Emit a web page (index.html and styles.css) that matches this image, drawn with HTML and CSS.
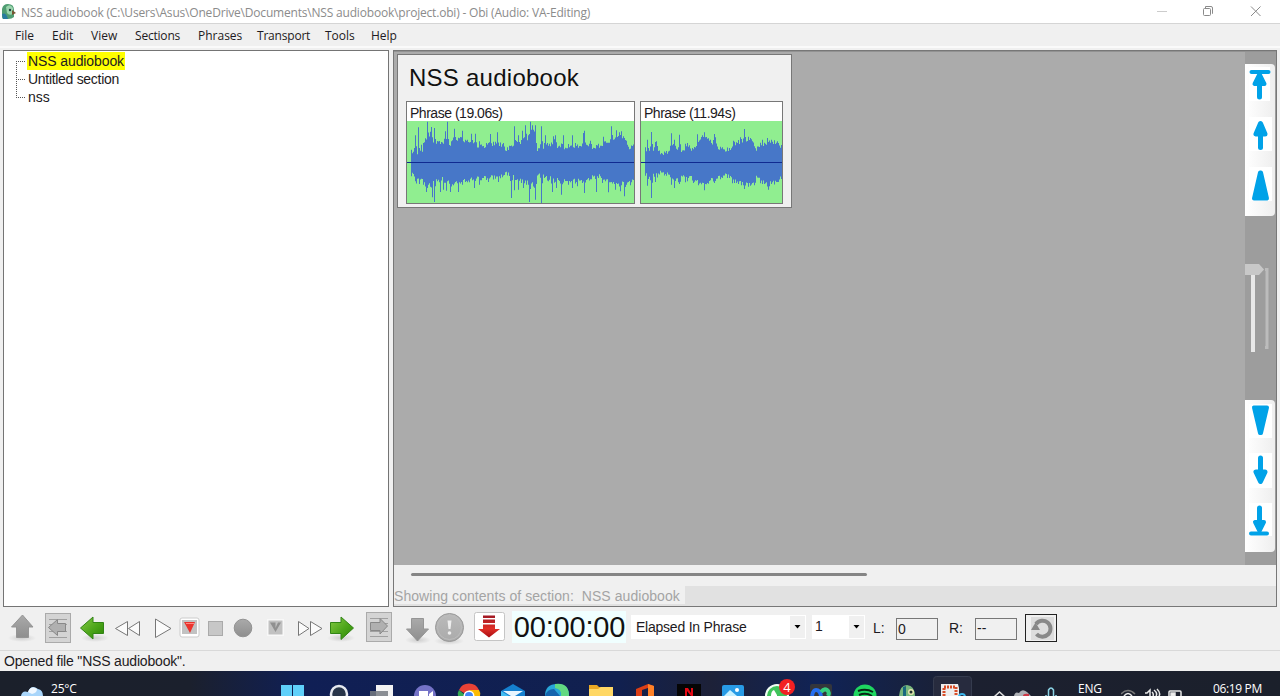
FILE: index.html
```html
<!DOCTYPE html>
<html lang="en">
<head>
<meta charset="utf-8">
<title>NSS audiobook - Obi</title>
<link rel="stylesheet" href="styles.css">
</head>
<body>
<div class="window">
  <header class="titlebar">
    <svg class="app-icon" width="16" height="18" viewBox="0 0 16 18"><path d="M1 14V6Q2 1 7 1Q13 1 13 7V14Q11 16 7 16H3Q1 16 1 14Z" fill="#4f9d72"/><path d="M5 4Q9 0 12 5V11Q8 13 6 10Z" fill="#9bd5ad"/><path d="M1 11Q5 9 7 16H2Z" fill="#277aa0"/><path d="M11 7L15 10L11 12Z" fill="#765532"/><circle cx="9" cy="7" r="1.2" fill="#244"/></svg>
    <span class="title-text">NSS audiobook (C:\Users\Asus\OneDrive\Documents\NSS audiobook\project.obi) - Obi (Audio: VA-Editing)</span>
    <svg class="window-buttons" width="110" height="23" viewBox="0 0 110 23" fill="none" stroke="#8a8a8a"><path d="M3 11.5h10" stroke="#ccc"/><rect x="49.500" y="8.500" width="7" height="7" rx="1"/><path d="M51.500 8.500V6.500H57q1.500 0 1.500 1.500v5.500H58"/><path d="M97 6.500l9.500 9.500M106.500 6.500L97 16"/></svg>
  </header>
  <nav class="menubar">
    <span class="m-file">File</span><span class="m-edit">Edit</span><span class="m-view">View</span><span class="m-sections">Sections</span><span class="m-phrases">Phrases</span><span class="m-transport">Transport</span><span class="m-tools">Tools</span><span class="m-help">Help</span>
  </nav>
  <main class="workspace">
    <aside class="toc">
      <svg class="tree-lines" width="12" height="46" viewBox="0 0 12 46" fill="none" stroke="#555" stroke-dasharray="1 1"><path d="M.5 9v37M0 9.500h10M0 27.500h10M0 45.500h10"/></svg>
      <div class="tree">
        <span class="node selected">NSS audiobook</span>
        <span class="node untitled">Untitled section</span>
        <span class="node">nss</span>
      </div>
    </aside>
    <section class="content">
      <div class="canvas-row">
        <div class="canvas">
          <div class="strip">
            <h1>NSS audiobook</h1>
            <div class="phrases">
              <div class="phrase first"><div class="phrase-label">Phrase (19.06s)</div><svg class="wave" id="wave-a" width="227" height="82" viewBox="0 0 227 82"></svg></div>
              <div class="phrase second"><div class="phrase-label">Phrase (11.94s)</div><svg class="wave" id="wave-b" width="141" height="82" viewBox="0 0 141 82"></svg></div>
            </div>
          </div>
        </div>
        <div class="scroller">
          <svg class="pad" width="30" height="152" viewBox="0 0 30 152">
            <rect x="4" y="3" width="21" height="34" fill="#fff"/><rect x="4" y="53" width="23" height="34" fill="#fff"/><rect x="4" y="103" width="23" height="34" fill="#fff"/>
            <g fill="#00a2e8" stroke="#00a2e8" stroke-linecap="round" stroke-linejoin="round"><path d="M6.500 8H23.500" stroke-width="4"/><path d="M14.500 16V33" stroke-width="5"/><path d="M14.500 10L9.500 20H19.500Z" stroke-width="4"/><path d="M15.500 69V83.500" stroke-width="5"/><path d="M15.500 59.500L11 70H20Z" stroke-width="5"/><path d="M15 108.500H16L22 134.500H9Z" stroke-width="4"/></g>
          </svg>
          <svg class="zoom-track" width="30" height="90" viewBox="0 0 30 90"><path d="M8 10V88" stroke="#e8e8e8" stroke-width="4"/><path d="M20 5.500H22V83.500H20" stroke="#bcbcbc" stroke-width="3" fill="none"/><path d="M0 0H14L19 5.500L14 11H0Z" fill="#c8c8c8"/></svg>
          <svg class="pad lower" width="30" height="152" viewBox="0 0 30 152">
            <rect x="4" y="4" width="23" height="34" fill="#fff"/><rect x="4" y="53" width="23" height="35" fill="#fff"/><rect x="4" y="103" width="23" height="33" fill="#fff"/>
            <g fill="#00a2e8" stroke="#00a2e8" stroke-linecap="round" stroke-linejoin="round"><path d="M9 7.500H22L16 33H15Z" stroke-width="4"/><path d="M15.500 58V73" stroke-width="5"/><path d="M15.500 81.500L11 72H20Z" stroke-width="5"/><path d="M14.500 108V123" stroke-width="5"/><path d="M14.500 131L10 122H19Z" stroke-width="4"/><path d="M6 133.500H22" stroke-width="4"/></g>
          </svg>
        </div>
      </div>
      <div class="hscroll"><div class="thumb"></div></div>
      <div class="section-status"><span>Showing contents of section:&nbsp; NSS audiobook</span></div>
    </section>
  </main>
  <section class="transport">
    <svg class="controls" width="512" height="43" viewBox="0 0 512 43">
      <defs>
        <linearGradient id="grey" x2="0" y2="1"><stop stop-color="#aaa"/><stop offset="1" stop-color="#8e8e8e"/></linearGradient>
        <linearGradient id="pale" x2="0" y2="1"><stop stop-color="#bbb"/><stop offset="1" stop-color="#aaa"/></linearGradient>
        <linearGradient id="green" x2="1" y2="1"><stop stop-color="#86ca45"/><stop offset=".55" stop-color="#4ca51a"/><stop offset="1" stop-color="#2c8504"/></linearGradient>
        <linearGradient id="red" x2="0" y2="1"><stop stop-color="#9f1722"/><stop offset=".6" stop-color="#e03028"/><stop offset="1" stop-color="#a80b12"/></linearGradient>
        <radialGradient id="shade"><stop stop-color="#aaa" stop-opacity=".5"/><stop offset="1" stop-color="#aaa" stop-opacity="0"/></radialGradient>
      </defs>
      <g fill="url(#shade)"><ellipse cx="22" cy="31" rx="14" ry="4"/><ellipse cx="95" cy="31" rx="14" ry="4"/><ellipse cx="341" cy="31" rx="14" ry="4"/><ellipse cx="418" cy="33" rx="13" ry="4"/><ellipse cx="449" cy="34" rx="15" ry="4"/></g>
      <path d="M22.500 8L33 20H28.500V30.500H16.500V20H11.500Z" fill="url(#grey)" stroke="#959595"/>
      <rect x="45.500" y="6.500" width="25" height="29" fill="#d4d4d4" stroke="#aaa"/><path d="M49 12.500H67M49 17.500H67M49 24.500H67M49 30.500H67" stroke="#a0a0a0"/><path d="M48.500 20.500L57.500 12.500V16.500H65.500V24.500H57.500V28.500Z" fill="#b0b0b0" stroke="#888"/>
      <path d="M80.500 21L93 10V15.500H103.500V26.500H93V32Z" fill="url(#green)" stroke="#328516"/>
      <g fill="#fbfbfb" stroke="#777"><path d="M127.500 14.500V28.500L115.500 21.500ZM139.500 14.500V28.500L128.500 21.500Z"/><path d="M155.500 12L171 21.500L155.500 30.500Z"/></g>
      <rect x="180" y="11" width="19" height="19" rx="2" fill="#fff" stroke="#ccc"/><rect x="182" y="13" width="15" height="14" fill="#c2c2c2"/><path d="M184 15H195L190 26Z" fill="#eb332d"/><path d="M186 16.500H194" stroke="#ff8780"/>
      <rect x="208.500" y="14.500" width="14" height="14" fill="#c7c7c7" stroke="#aaa"/><circle cx="243" cy="21" r="8.800" fill="url(#grey)" stroke="#929292"/>
      <rect x="267" y="12" width="17" height="17" fill="#f8f8f8"/><rect x="268.500" y="13.500" width="14" height="14" fill="#c1c1c1"/><path d="M270 15.500L275.500 25L281 15.500H278L275.500 21V15.500Z" fill="#909090"/>
      <path d="M298.500 14.500V28.500L309 21.500ZM310.500 14.500V28.500L322 21.500Z" fill="#fbfbfb" stroke="#777"/>
      <path d="M353.500 21L341 10V15.500H330.500V26.500H341V32.500Z" fill="url(#green)" stroke="#328516"/>
      <rect x="366.500" y="5.500" width="25" height="29" fill="#d4d4d4" stroke="#aaa"/><path d="M370 11.500H388M370 16.500H388M370 24.500H388M370 29.500H388" stroke="#a0a0a0"/><path d="M387.500 19L380 11.500V15.500H370.500V23.500H380V27Z" fill="#b0b0b0" stroke="#888"/>
      <path d="M411.500 11.500H423.500V22H428.500L417.500 34L406.500 22H411.500Z" fill="url(#grey)" stroke="#959595"/>
      <circle cx="449.500" cy="20.500" r="14" fill="url(#pale)" stroke="#989898"/><circle cx="449.500" cy="20.500" r="12" fill="none" stroke="#bcbcbc"/><path d="M447.500 13.500H451.500L450.500 22H448.500Z" fill="#eee"/><circle cx="449.500" cy="26" r="1.800" fill="#eee"/>
      <rect x="474.500" y="5.500" width="30" height="28" rx="2" fill="#fff" stroke="#c5c5c5"/><path d="M483 8.500H495V11H483ZM483 12.500H495V16H483ZM483 17.500H495V22H500L489 30.500L478 22H483Z" fill="url(#red)"/>
    </svg>
    <div class="clock">00:00:00</div>
    <div class="combo mode"><span>Elapsed In Phrase</span><i><svg width="7" height="4" viewBox="0 0 7 4"><path d="M.5 0h6L3.500 3.500z"/></svg></i></div>
    <div class="combo speed"><span>1</span><i><svg width="7" height="4" viewBox="0 0 7 4"><path d="M.5 0h6L3.500 3.500z"/></svg></i></div>
    <span class="channel left">L:</span><div class="level">0</div>
    <span class="channel right">R:</span><div class="level dashes">--</div>
    <div class="reset"><svg width="26" height="24" viewBox="0 0 26 24"><path d="M2 1H25V24H2Z" fill="#ddd"/><path d="M7 8A8 8 0 1 1 7.500 18" fill="none" stroke="#888" stroke-width="4"/><path d="M2 14L6.500 6.500L11 14Z" fill="#888"/></svg></div>
  </section>
  <footer class="statusbar">Opened file "NSS audiobook".</footer>
  <footer class="taskbar">
    <svg class="weather" width="26" height="25" viewBox="0 0 26 25"><path d="M0 25Q1 19 7 21Q10 13 17 18Q22 19 22 25Z" fill="#a8d5fa"/><path d="M7 21Q10 14 16 18Q16 22 11 23Z" fill="#f1f8ff"/></svg>
    <span class="temp">25°C</span>
    <div class="apps">
      <svg width="44" height="25" viewBox="-22 0 44 25"><path d="M-12 14H-1V25H-12ZM0 14H11V25H0Z" fill="#5fd0fa"/></svg>
      <svg width="44" height="25" viewBox="-22 0 44 25"><circle cx="2" cy="23" r="8" fill="#273449" stroke="#e6e9ef" stroke-width="2.500"/></svg>
      <svg width="44" height="25" viewBox="-22 0 44 25"><path d="M-5 14H12V25H-5Z" fill="#f3f3f3"/><path d="M-11 20H7V25H-11Z" fill="#777b83" opacity=".85"/></svg>
      <svg width="44" height="25" viewBox="-22 0 44 25"><circle cx="0" cy="25" r="11" fill="#7472c7"/><path d="M-6 20H3V25H-6ZM4 23L8 20V25H4Z" fill="#fff"/></svg>
      <svg width="44" height="25" viewBox="-22 0 44 25"><path d="M-10 19A11 11 0 0 1 10 19L0 25Z" fill="#e94235"/><path d="M-10 19L-3 25H-11Q-12 22-10 19Z" fill="#34a853"/><path d="M0 19H10Q12 22 11 25H0Z" fill="#fbbc05"/><circle cx="0" cy="25" r="5.500" fill="#fff"/><circle cx="0" cy="25" r="4" fill="#4285f4"/></svg>
      <svg width="44" height="25" viewBox="-22 0 44 25"><path d="M-12 20L0 13L12 20V25H-12Z" fill="#1580cf"/><path d="M-10 20H10L2 25H-2Z" fill="#e8f6ff"/><path d="M-12 20L-4 25H-12Z" fill="#42bdf2"/></svg>
      <svg width="44" height="25" viewBox="-22 0 44 25"><path d="M-12 25Q-12 13 0 13Q12 13 12 25Z" fill="#28a5d8"/><path d="M-2 13Q12 11 12 25H4Q5 18-2 17Z" fill="#62d981"/><path d="M-12 25Q-10 18-3 18L3 25Z" fill="#1463ad"/></svg>
      <svg width="44" height="25" viewBox="-22 0 44 25"><path d="M-12 14H-4L-2 16H12V25H-12Z" fill="#eaa824"/><path d="M-12 18H-3L0 16H12V25H-12Z" fill="#ffd764"/></svg>
      <svg width="44" height="25" viewBox="-22 0 44 25"><path d="M-9 18L3 13L9 15V25H3V17L-3 19V25H-9Z" fill="#dc3e15"/><path d="M3 13L9 15V25H3Z" fill="#ff8127"/></svg>
      <svg width="44" height="25" viewBox="-22 0 44 25"><path d="M-12 13H12V25H-12Z" fill="#050505"/><path d="M-4 17H-1L2 22V17H4V25H2L-2 20V25H-4Z" fill="#e50914"/></svg>
      <svg width="44" height="25" viewBox="-22 0 44 25"><rect x="-11" y="14" width="22" height="14" rx="2" fill="#289be6"/><path d="M-9 25L-3 19L4 25Z" fill="#c7f0ff"/><circle cx="4" cy="19" r="2" fill="#fff"/></svg>
      <svg width="44" height="25" viewBox="-22 0 44 25"><circle cx="0" cy="25" r="12" fill="#f1fff3"/><circle cx="0" cy="25" r="10" fill="#3fc35b"/><path d="M-6 25Q-6 20-3 19L0 24V25Z" fill="#fff"/><circle cx="10" cy="16" r="8" fill="#f22022"/><text class="badge-text" x="10" y="21" text-anchor="middle">4</text></svg>
      <svg width="44" height="25" viewBox="-22 0 44 25"><rect x="-11" y="13" width="22" height="13" rx="2" fill="#34363b"/><path d="M-9 25Q-8 19-5 19Q-1 19 0 25" fill="none" stroke="#266ff0" stroke-width="4"/><path d="M0 21Q3 17 6 19Q9 21 7 25" fill="none" stroke="#36ce80" stroke-width="4"/></svg>
      <svg width="44" height="25" viewBox="-22 0 44 25"><circle cx="0" cy="25" r="11.500" fill="#1ed760"/><path d="M-7 20Q1 17 8 21M-6 24Q1 21 7 25" stroke="#082715" stroke-width="2" fill="none"/></svg>
      <svg width="44" height="25" viewBox="-22 0 44 25"><path d="M-10 25Q-9 14-2 14Q6 15 6 25Z" fill="#78b57c"/><path d="M-6 16L-3 15V25H-6Z" fill="#18677e"/><circle cx="2" cy="21" r="3" fill="#e4e6ad"/><circle cx="2" cy="21" r="1.500" fill="#233"/></svg>
      <svg width="44" height="25" viewBox="-22 0 44 25"><rect x="-19.500" y="5.500" width="38" height="25" rx="3" fill="#272b3e" stroke="#353b4e"/><path d="M-12 13H5L6 17V25H-12Z" fill="#eee"/><path d="M-9 25V16H3V25" fill="none" stroke="#d84d28" stroke-width="3" stroke-dasharray="2 1"/><circle cx="9" cy="26" r="3" fill="none" stroke="#3cb7ed" stroke-width="2"/></svg>
    </div>
    <svg class="tray" width="75" height="25" viewBox="0 0 75 25"><path d="M8 26L13.500 21L19 26" fill="none" stroke="#ddd" stroke-width="1.500"/><path d="M28 25Q29 20 33 22Q36 17 41 21L45 25Z" fill="#adb0b5"/><path d="M37 25Q37 22 43 23V25Z" fill="#cb3745"/><path d="M62.500 25V19Q65 15 67.500 19V25" fill="none" stroke="#8bd3e5" stroke-width="1.500"/><path d="M60 24V25M70 24V25" stroke="#8bd3e5" stroke-width="1.500"/></svg>
    <span class="lang">ENG</span>
    <svg class="net" width="70" height="25" viewBox="0 0 70 25" fill="none" stroke="#e8e8e8" stroke-width="1.500"><g transform="translate(-6 0)"><path d="M6 23Q13 16 20 23" stroke="#777"/><path d="M9 25Q13 20 17 25"/></g><path d="M24 22H26L29 19V25M31 21Q33 23 32 25M33 19Q37 22 35 25M36 18Q40 22 38 25"/><rect x="48" y="20" width="12" height="8" rx="1"/><path d="M50 22H54V25H50Z" fill="#eee"/></svg>
    <span class="time">06:19 PM</span>
  </footer>
</div>
<script src="waves.js"></script>
</body>
</html>
```

FILE: styles.css
```css
* { box-sizing: border-box; }
body { margin: 0; font-family: "Liberation Sans", Arial, sans-serif; color: #1d1a22; }
svg { display: block; flex: none; }
.window { width: 1280px; height: 696px; overflow: hidden; display: flex; flex-direction: column; background: #f0f0f0; }
.titlebar { height: 24px; flex: none; display: flex; background: #fff; border-bottom: 1px solid #d5d5d5; padding-left: 1px; }
.app-icon { margin-top: 3px; }
.title-text { margin-left: 4px; width: 600px; font: 12px/26px "Open Sans", sans-serif; color: #8b8b8b; white-space: nowrap; letter-spacing: -.19px; }
.window-buttons { margin-left: auto; margin-right: 16px; }
.menubar { height: 26px; flex: none; display: flex; padding-left: 15px; font: 12px/24px "Open Sans", sans-serif; background: linear-gradient(#f0f0f0 22px, #fafafa 22px, #fafafa 24px, #f0f0f0 24px); white-space: nowrap; }
.menubar span { flex: none; }
.m-sections, .m-transport { letter-spacing: -.2px; }
.m-file { width: 37px; } .m-edit { width: 39px; } .m-view { width: 44px; } .m-sections { width: 63px; }
.m-phrases { width: 59px; } .m-transport { width: 68px; } .m-tools { width: 46px; }
.workspace { height: 557px; flex: none; display: flex; gap: 4px; padding-left: 3px; }
.toc { width: 386px; flex: none; display: flex; background: #fff; border: 1px solid #747474; padding-left: 12px; }
.tree-lines { margin-top: 1px; }
.tree { display: flex; flex-direction: column; align-items: flex-start; padding-top: 1px; }
.node { height: 18px; font-size: 14px; line-height: 18px; white-space: nowrap; }
.selected { background: #ff0; box-shadow: -1px 0 #ff0, 1px 0 #ff0; letter-spacing: -.1px; }
.untitled { letter-spacing: -.3px; }
.content { width: 884px; flex: none; display: flex; flex-direction: column; border: 1px solid #777; background: #f0f0f0; }
.canvas-row { height: 514px; flex: none; display: flex; background: #ababab; border-top: 1px solid #929292; }
.canvas { width: 851px; flex: none; padding: 2px 0 0 3px; }
.strip { width: 395px; height: 154px; border: 1px solid #777; background: #f0f0f0; padding-left: 8px; }
.strip h1 { margin: 0 0 0 3px; height: 46px; font: 24px/46px "Liberation Sans", sans-serif; color: #111; white-space: nowrap; letter-spacing: .25px; }
.phrases { display: flex; gap: 5px; }
.phrase { height: 103px; border: 1px solid #777; background: #fff; }
.first { width: 229px; } .second { width: 143px; }
.phrase-label { height: 19px; padding-left: 3px; font-size: 14px; line-height: 23px; white-space: nowrap; letter-spacing: -.48px; }
.wave { background: #90ee90; }
.scroller { width: 31px; background: #9d9d9d; padding-top: 12px; }
.pad { background: linear-gradient(90deg, #fff, #eee); border-radius: 0 4px 4px 0; }
.zoom-track { margin-top: 48px; }
.lower { margin-top: 46px; }
.hscroll { height: 21px; flex: none; padding: 8px 0 0 17px; }
.thumb { width: 456px; height: 3px; background: #858585; border-radius: 2px; }
.section-status { flex: 1; background: #e1e1e1; font-size: 14px; line-height: 20px; color: #a4a4a4; white-space: nowrap; }
.section-status span { display: block; width: 291px; height: 18px; background: #f0f0f0; letter-spacing: .06px; }
.transport { height: 43px; flex: none; display: flex; }
.clock { width: 114px; height: 32px; margin: 4px 5px 0 0; background: #f0ffff; color: #111; font: 29px/33px "Liberation Sans", sans-serif; text-align: center; white-space: nowrap; letter-spacing: -.2px; padding-left: 1px; }
.combo { height: 24px; display: flex; margin-top: 8px; background: #fff; font-size: 14px; line-height: 24px; white-space: nowrap; }
.combo i { height: 22px; width: 15px; margin: 1px 1px 0 auto; background: #f0f0f0; display: flex; align-items: center; justify-content: center; }
.mode { width: 175px; padding-left: 5px; letter-spacing: -.23px; }
.speed { width: 53px; margin-left: 6px; padding-left: 3px; line-height: 22px; }
.channel { font-size: 14px; line-height: 43px; flex: none; }
.left { width: 23px; margin-left: 8px; } .right { width: 26px; margin-left: 11px; }
.level { width: 42px; height: 22px; margin-top: 11px; padding-left: 1px; border: 1px solid #777; font-size: 14px; line-height: 20px; }
.dashes { line-height: 18px; }
.reset { width: 32px; height: 28px; margin: 7px 0 0 8px; padding: 1px 0 0 3px; border: 1px solid #222; }
.statusbar { height: 21px; flex: none; padding-left: 4px; font-size: 14px; line-height: 21px; border-top: 1px solid #d9d9d9; white-space: nowrap; letter-spacing: -.18px; }
.taskbar { height: 25px; flex: none; display: flex; background: linear-gradient(90deg, #1b202b 0, #1b202d 190px, #101f55 300px, #11204f 620px, #1d2138 710px, #102356 820px, #1c2030 970px, #1b202b 1280px); color: #fff; font: 12px/35px "Open Sans", sans-serif; white-space: nowrap; }
.weather { margin-left: 21px; }
.temp { width: 220px; padding-left: 4px; letter-spacing: -.2px; }
.apps { width: 704px; flex: none; display: flex; margin-left: 4px; }
.badge-text { fill: #fff; font: 13px "Open Sans", sans-serif; }
.tray { margin-left: 11px; }
.lang { width: 43px; margin-left: 17px; letter-spacing: -.2px; }
.time { margin-left: 22px; letter-spacing: -.35px; }
.temp, .lang, .time { flex: none; }
```

FILE: waves.js
```js
// Peaks are pairs of horizontal position and height, in thirds of a pixel.
const parse = text => text.split(" ").map(pair => pair.split(":").map(Number));
const wobble = [3, 5, -3, 2, 9, -1, -5, 6, 2, -2, 11, 0, 4, -4, 7, 1, -1, 8, -3];

function edge(points, spikes, x, origin, sign) {
  const source = x * 3 + origin;
  let i = 0;
  while (i < points.length - 2 && points[i + 1][0] < source) i++;
  const [x1, y1] = points[i], [x2, y2] = points[i + 1];
  const t = Math.max(0, Math.min(1, (source - x1) / (x2 - x1)));
  const noise = wobble[(x * 5 + (x >> 3) * 3) % wobble.length];
  let y = y1 + (y2 - y1) * t + sign * noise;
  for (const [sx, sy] of spikes) {
    const distance = Math.abs(sx - source);
    const reach = distance < 1.6 ? sy : distance < 4 ? y + (sy - y) * .25 : y;
    y = sign < 0 ? Math.min(y, reach) : Math.max(y, reach);
  }
  return (y - 219) / 3;
}

function drawWave(id, origin, width, top, topSpikes, bottom, bottomSpikes) {
  const data = [top, topSpikes, bottom, bottomSpikes].map(parse);
  let d = "";
  for (let x = Math.floor((data[0][0][0] - origin) / 3); x < width; x++) {
    const a = edge(data[0], data[1], x, origin, -1).toFixed(1);
    const b = edge(data[2], data[3], x, origin, 1).toFixed(1);
    d += `M${x} ${a}H${x + 1}V${b}H${x}Z`;
  }
  document.getElementById(id).innerHTML = `<path d="${d}" fill="#4777c8"/><path d="M0 41.5H${width}" stroke="#102a91"/>`;
}

drawWave("wave-a", 51, 227,
  "63:310 75:312 80:320 95:312 103:280 110:265 120:262 130:280 140:285 155:282 170:290 180:290 190:275 210:275 230:283 250:290 270:298 300:292 320:288 335:295 350:308 365:292 380:285 400:285 415:270 430:255 437:265 440:320 445:300 465:300 480:290 500:295 530:300 560:295 590:290 610:300 640:290 660:280 690:270 705:280 715:300 733:297",
  "75:262 85:238 92:290 112:221 122:237 133:240 165:250 172:221 193:242 215:248 243:257 256:257 268:280 300:258 322:253 340:285 373:235 385:262 397:248 405:232 420:221 425:232 434:232 454:235 465:262 490:265 495:262 518:262 545:262 580:255 583:248 601:278 640:266 664:235 677:247 687:253 693:250 700:265",
  "63:380 70:378 75:400 85:385 95:395 105:405 120:410 135:400 150:385 170:395 185:405 200:400 230:395 250:390 280:388 310:385 340:380 350:373 370:385 390:395 410:400 430:405 438:410 440:375 460:382 480:390 500:395 530:400 550:395 580:400 600:390 620:380 640:390 670:400 700:405 715:400 733:385",
  "77:402 88:408 108:432 112:420 125:448 133:462 150:432 160:425 168:428 180:432 190:412 203:432 215:410 237:403 253:420 268:410 295:402 325:402 363:450 373:427 385:425 400:420 418:462 434:455 454:466 475:400 485:432 497:420 513:440 545:420 560:415 583:435 617:432 635:405 655:433 675:425 690:430 703:445 720:412");

drawWave("wave-b", 123, 141,
  "135:303 145:308 155:305 168:300 175:312 190:318 205:310 215:295 230:302 245:308 260:300 280:308 292:290 305:272 315:270 325:280 345:292 360:305 390:308 400:290 415:290 430:278 445:275 460:280 465:310 475:297 490:292 510:285 530:290 540:298 547:308",
  "142:275 154:252 164:283 167:280 212:256 222:275 238:260 256:287 262:285 268:292 292:259 307:262 313:253 330:275 341:258 345:268 398:278 414:276 421:268 433:243 450:270 485:275 502:270 513:275 532:280",
  "135:378 145:388 165:380 180:373 205:380 220:390 235:395 250:382 270:385 285:395 300:400 315:405 330:395 350:390 370:380 390:382 400:395 420:402 440:408 460:405 470:380 480:395 500:405 515:400 535:395 547:375",
  "142:413 154:450 164:402 212:410 223:420 237:408 254:403 262:400 278:405 295:412 313:427 341:405 397:406 415:408 433:423 462:412 485:408 505:425 530:402");
```
